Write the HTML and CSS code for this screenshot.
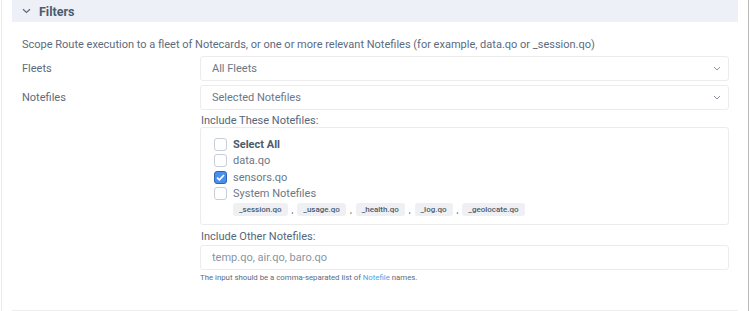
FILE: index.html
```html
<!DOCTYPE html>
<html lang="en">
<head>
<meta charset="UTF-8" />
<title>Route Filters</title>
<link rel="stylesheet" href="styles.css">
</head>
<body>

<div class="panel">
  <div class="panel-head">
    <svg class="chev" width="9" height="6" viewBox="0 0 9 6"><path d="M1 1.2 L4.5 4.5 L8 1.2" fill="none" stroke="#5b6b80" stroke-width="1.2"/></svg>
    <span>Filters</span>
  </div>

  <div class="panel-body">
    <p class="desc">Scope Route execution to a fleet of Notecards, or one or more relevant Notefiles (for example, data.qo or _session.qo)</p>

    <div class="row">
      <label class="row-label">Fleets</label>
      <div class="select">All Fleets<svg class="caret" width="8" height="5" viewBox="0 0 8 5"><path d="M1 1 L4 4 L7 1" fill="none" stroke="#8a96a6" stroke-width="1"/></svg></div>
    </div>
    <div class="row">
      <label class="row-label">Notefiles</label>
      <div class="select">Selected Notefiles<svg class="caret" width="8" height="5" viewBox="0 0 8 5"><path d="M1 1 L4 4 L7 1" fill="none" stroke="#8a96a6" stroke-width="1"/></svg></div>
    </div>

    <div class="sub">
      <div class="sub-label">Include These Notefiles:</div>
      <div class="checklist">
        <label class="check bold"><span class="box"></span>Select All</label>
        <label class="check"><span class="box"></span>data.qo</label>
        <label class="check"><span class="box on"><svg width="9" height="7" viewBox="0 0 9 7"><path d="M1 3.6 L3.4 5.8 L8 1" fill="none" stroke="#fff" stroke-width="1.6"/></svg></span>sensors.qo</label>
        <label class="check"><span class="box"></span>System Notefiles</label>
        <div class="chips">
          <span class="chip">_session.qo</span>,
          <span class="chip">_usage.qo</span>,
          <span class="chip">_health.qo</span>,
          <span class="chip">_log.qo</span>,
          <span class="chip">_geolocate.qo</span>
        </div>
      </div>

      <div class="sub-label other">Include Other Notefiles:</div>
      <div class="input">temp.qo, air.qo, baro.qo</div>
      <div class="help">The input should be a comma-separated list of <a href="#">Notefile</a> names.</div>
    </div>
  </div>
</div>

</body>
</html>
```

FILE: styles.css
```css
body {
  margin: 0;
  background: #fff;
  font-family: Roboto, Arial, sans-serif;
  color: #5b6b80;
}

.panel {
  width: 748px;
  height: 311px;
  margin-left: 1px;
  border-left: 1px solid #ececec;
  border-right: 1px solid #b8b8b8;
  box-sizing: border-box;
  padding: 0 10px;
}

.panel-head {
  height: 22px;
  background: #edf1f7;
  display: flex;
  align-items: center;
  padding-left: 10px;
  font-size: 12.5px;
  font-weight: 700;
  color: #4c5b6e;
}
.chev {
  margin-right: 8px;
}

.panel-body {
  height: 289px;
  border-bottom: 1px solid #ececec;
  box-sizing: border-box;
  padding: 15px 9px 0 10px;
}

.desc {
  margin: 0 0 4px 0;
  font-size: 11px;
  line-height: 15px;
}

.row {
  display: flex;
  align-items: center;
  margin-bottom: 4px;
}
.row-label {
  width: 178px;
  font-size: 11px;
}

.select, .input {
  flex: 1;
  height: 25px;
  border: 1px solid #ececec;
  border-radius: 3px;
  box-sizing: border-box;
  display: flex;
  align-items: center;
  justify-content: space-between;
  padding: 0 7px 0 11px;
  font-size: 11px;
  color: #6b7788;
}

.sub {
  margin-left: 178px;
}
.sub-label {
  font-size: 11px;
  font-weight: 400;
  color: #55667a;
  line-height: 13px;
  margin: 1px 0 0 1px;
}
.sub-label.other {
  margin: 5px 0 2px 1px;
}

.checklist {
  border: 1px solid #ececec;
  border-radius: 3px;
  height: 98px;
  box-sizing: border-box;
  padding: 8px 13px;
}

.check {
  display: flex;
  align-items: center;
  height: 16.5px;
  font-size: 11px;
  color: #6b7788;
}
.check.bold {
  font-weight: 700;
  color: #4c5b6e;
}
.box {
  width: 13px;
  height: 13px;
  border: 1px solid #c8ced6;
  border-radius: 3px;
  box-sizing: border-box;
  margin-right: 6px;
  display: flex;
  align-items: center;
  justify-content: center;
}
.box.on {
  background: #4a90e8;
  border-color: #2e64b8;
}

.chips {
  margin: 1px 0 0 19px;
  display: flex;
  align-items: center;
  gap: 4px;
  font-size: 9px;
}
.chip {
  background: #eef0f3;
  border-radius: 3px;
  padding: 1px 6px;
  font-size: 8px;
  font-weight: 500;
  color: #4c5b6e;
  line-height: 11px;
}

.input {
  color: #8a94a2;
}

.help {
  margin-top: 3px;
  font-size: 7.8px;
  line-height: 10px;
  color: #5b6b80;
}
.help a {
  color: #4aa3e8;
  text-decoration: none;
}
```
